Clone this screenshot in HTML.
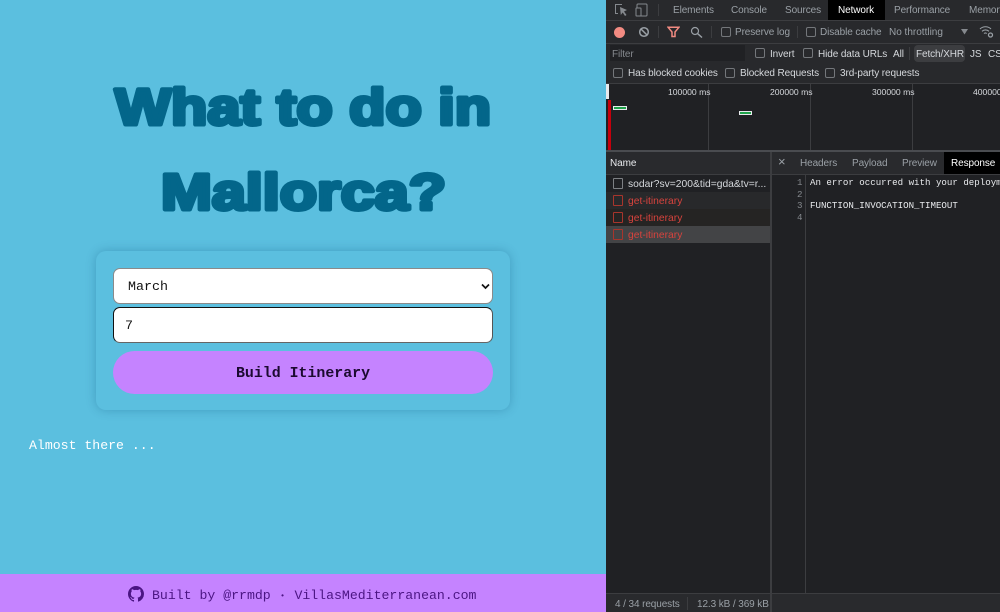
<!DOCTYPE html>
<html lang="en">
<head>
<meta charset="utf-8">
<title>What to do in Mallorca?</title>
<style>
html,body{margin:0;padding:0;width:1000px;height:612px;overflow:hidden;background:#5bbfdf}
*{box-sizing:border-box}
.a{position:absolute;white-space:nowrap}
.m{font-family:"Liberation Mono",monospace}
.s{font-family:"Liberation Sans",sans-serif}
#left{position:absolute;left:0;top:0;width:606px;height:612px;background:#5bbfdf;overflow:hidden}
#card{position:absolute;left:96px;top:251px;width:414px;height:159px;background:#5bbfdf;border-radius:10px;box-shadow:0 0 10px rgba(0,70,110,.28)}
#sel{position:absolute;left:112.5px;top:267.5px;width:380.5px;height:36px;background:#fff;border:1px solid #8a8a8a;border-radius:7px}
#inp{position:absolute;left:112.5px;top:307px;width:380.5px;height:36px;background:#fff;border:1px solid;border-color:#111 #555 #666 #111;border-radius:7px}
#btn{position:absolute;left:112.5px;top:351px;width:380.5px;height:43px;background:#c583ff;border-radius:22px}
#foot{position:absolute;left:0;top:574px;width:606px;height:38px;background:#c583ff}
#dev{position:absolute;left:606px;top:0;width:394px;height:612px;background:#202124;overflow:hidden;color:#9aa0a6;font:10px "Liberation Sans",sans-serif;letter-spacing:-.1px}
.l{position:absolute;background:#3c3d40}
.cb{position:absolute;width:10px;height:10px;border:1px solid #74777b;border-radius:2px}
.t{position:absolute;white-space:nowrap;line-height:14px;margin-top:1px}
.w{color:#d5d8dc}
.r{color:#d8433d}
.n{font-size:10.3px;letter-spacing:0}
.code{font:9.13px/12px "Liberation Mono",monospace;color:#e8eaed;letter-spacing:0;margin-top:0}
.num{font:9.13px/12px "Liberation Mono",monospace;color:#85898e;letter-spacing:0;margin-top:0}
.tl{font-size:8.6px;letter-spacing:0;margin-top:0}
</style>
</head>
<body>
<div id="left">
  <svg class="a" style="left:0;top:0" width="606" height="240">
    <text x="115" y="124.5" font-family="Liberation Sans" font-weight="700" font-size="51" fill="#03668a" stroke="#03668a" stroke-width="4" stroke-linejoin="round" textLength="376" lengthAdjust="spacingAndGlyphs">What to do in</text>
    <text x="161" y="209.5" font-family="Liberation Sans" font-weight="700" font-size="51" fill="#03668a" stroke="#03668a" stroke-width="4" stroke-linejoin="round" textLength="285" lengthAdjust="spacingAndGlyphs">Mallorca?</text>
  </svg>
  <div id="card"></div>
  <div id="sel"></div>
  <div class="a m" style="left:128px;top:279px;font-size:13.33px;line-height:17px;color:#111">March</div>
  <svg class="a" style="left:481px;top:283px" width="9" height="7"><path d="M1 1.5 L4.5 5 L8 1.5" fill="none" stroke="#111" stroke-width="1.7"/></svg>
  <div id="inp"></div>
  <div class="a m" style="left:125px;top:318px;font-size:13.33px;line-height:17px;color:#111">7</div>
  <div id="btn"></div>
  <div class="a m" style="left:236px;top:365px;font-size:14.9px;line-height:18px;font-weight:700;color:#1c0a30">Build Itinerary</div>
  <div class="a m" style="left:29px;top:437px;font-size:13.2px;line-height:17px;color:#fff">Almost there ...</div>
  <div id="foot"></div>
  <svg class="a" style="left:128px;top:586px" width="16" height="16" viewBox="0 0 16 16"><path fill="#4b1583" d="M8 0C3.58 0 0 3.58 0 8c0 3.54 2.29 6.53 5.47 7.59.4.07.55-.17.55-.38v-1.34c-2.23.48-2.7-1.07-2.7-1.07-.36-.92-.89-1.17-.89-1.17-.73-.5.05-.49.05-.49.8.06 1.23.82 1.23.82.71 1.22 1.87.87 2.33.66.07-.52.28-.87.51-1.07-1.78-.2-3.64-.89-3.64-3.95 0-.87.31-1.59.82-2.15-.08-.2-.36-1.02.08-2.12 0 0 .67-.21 2.2.82a7.6 7.6 0 0 1 4 0c1.53-1.04 2.2-.82 2.2-.82.44 1.1.16 1.92.08 2.12.51.56.82 1.27.82 2.15 0 3.07-1.87 3.75-3.65 3.95.29.25.54.73.54 1.48v2.2c0 .21.15.46.55.38A8 8 0 0 0 16 8c0-4.42-3.58-8-8-8z"/></svg>
  <div class="a m" style="left:152px;top:587px;font-size:13.2px;line-height:17px;color:#4b1583">Built by @rrmdp <span style="display:inline-block;width:7.92px;text-align:center;font-size:8px;vertical-align:1px">•</span> VillasMediterranean.com</div>
</div>

<div id="dev">
  <div style="position:absolute;left:0;top:0;width:394px;height:84px;background:#28292c"></div>
  <!-- top toolbar -->
  <div class="l" style="left:0;top:20px;width:394px;height:1px"></div>
  <svg class="a" style="left:8px;top:3px" width="36" height="14" viewBox="0 0 36 14">
    <path d="M8 1.5H1.5V10.5H4" fill="none" stroke="#85898e"/>
    <path d="M6 4L13 7L10 8.5L12.5 12L11 13L8.7 9.5L6.8 12Z" fill="#85898e"/>
    <rect x="23" y="1" width="10" height="12" rx="1" fill="none" stroke="#85898e"/>
    <rect x="22" y="5" width="5" height="8" rx="0.5" fill="#28292c" stroke="#85898e"/>
  </svg>
  <div class="l" style="left:52px;top:4px;width:1px;height:12px"></div>
  <div class="t" style="left:67px;top:3px">Elements</div>
  <div class="t" style="left:125px;top:3px">Console</div>
  <div class="t" style="left:179px;top:3px">Sources</div>
  <div style="position:absolute;left:222px;top:0;width:57px;height:20px;background:#000"></div>
  <div class="t" style="left:232px;top:3px;color:#fff">Network</div>
  <div class="t" style="left:288px;top:3px">Performance</div>
  <div class="t" style="left:363px;top:3px">Memory</div>

  <!-- second toolbar -->
  <div class="l" style="left:0;top:43px;width:394px;height:1px"></div>
  <div style="position:absolute;left:8px;top:27px;width:11px;height:11px;border-radius:50%;background:#f28b82"></div>
  <svg class="a" style="left:32px;top:26px" width="12" height="12" viewBox="0 0 12 12"><circle cx="6" cy="6" r="4.3" fill="none" stroke="#9aa0a6" stroke-width="1.5"/><path d="M3 3L9 9" stroke="#9aa0a6" stroke-width="1.5"/></svg>
  <div class="l" style="left:52px;top:26px;width:1px;height:12px"></div>
  <svg class="a" style="left:61px;top:26px" width="13" height="12" viewBox="0 0 13 12"><path d="M1 1.2H12L8 6V10.5H5V6Z" fill="none" stroke="#f28b82" stroke-width="1.5"/></svg>
  <svg class="a" style="left:84px;top:26px" width="13" height="12" viewBox="0 0 13 12"><circle cx="5" cy="5" r="3.5" fill="none" stroke="#9aa0a6" stroke-width="1.2"/><path d="M7.7 7.7L12 11.5" stroke="#9aa0a6" stroke-width="1.4"/></svg>
  <div class="l" style="left:105px;top:26px;width:1px;height:12px"></div>
  <div class="cb" style="left:115px;top:27px"></div>
  <div class="t" style="left:129px;top:25px">Preserve log</div>
  <div class="l" style="left:191px;top:26px;width:1px;height:12px"></div>
  <div class="cb" style="left:200px;top:27px"></div>
  <div class="t" style="left:214px;top:25px">Disable cache</div>
  <div class="t" style="left:283px;top:25px;letter-spacing:0">No throttling</div>
  <svg class="a" style="left:355px;top:29px" width="8" height="6"><path d="M0 0H7L3.5 5.5Z" fill="#85898e"/></svg>
  <svg class="a" style="left:373px;top:25px" width="15" height="13" viewBox="0 0 15 13"><path d="M1 4C4 1 9 1 12 4M3 6.3C5 4.5 8 4.5 10 6.3M5 8.5C5.8 7.8 7 7.8 7.8 8.5" fill="none" stroke="#9aa0a6" stroke-width="1.1"/><circle cx="11.5" cy="10" r="2" fill="none" stroke="#9aa0a6" stroke-width="1.3"/></svg>

  <!-- filter row -->
  <div style="position:absolute;left:4px;top:45px;width:135px;height:16px;background:#202124"></div>
  <div class="t" style="left:6px;top:47px;color:#85898e">Filter</div>
  <div class="cb" style="left:149px;top:48px"></div>
  <div class="t w" style="left:164px;top:47px">Invert</div>
  <div class="cb" style="left:197px;top:48px"></div>
  <div class="t w" style="left:212px;top:47px">Hide data URLs</div>
  <div class="t w" style="left:287px;top:47px">All</div>
  <div class="l" style="left:303px;top:47px;width:1px;height:13px"></div>
  <div style="position:absolute;left:308px;top:45px;width:51px;height:17px;background:#3c3d40;border-radius:4px"></div>
  <div class="t w" style="left:310px;top:47px">Fetch/XHR</div>
  <div class="t w" style="left:364px;top:47px">JS</div>
  <div class="t w" style="left:382px;top:47px">CSS</div>

  <div class="cb" style="left:7px;top:68px"></div>
  <div class="t w" style="left:22px;top:66px">Has blocked cookies</div>
  <div class="cb" style="left:119px;top:68px"></div>
  <div class="t w" style="left:134px;top:66px">Blocked Requests</div>
  <div class="cb" style="left:219px;top:68px"></div>
  <div class="t w" style="left:234px;top:66px">3rd-party requests</div>
  <div class="l" style="left:0;top:83px;width:394px;height:1px"></div>

  <!-- timeline -->
  <div class="l" style="left:102px;top:84px;width:1px;height:66px"></div>
  <div class="l" style="left:204px;top:84px;width:1px;height:66px"></div>
  <div class="l" style="left:306px;top:84px;width:1px;height:66px"></div>
  <div class="t w tl" style="left:62px;top:85px">100000 ms</div>
  <div class="t w tl" style="left:164px;top:85px">200000 ms</div>
  <div class="t w tl" style="left:266px;top:85px">300000 ms</div>
  <div class="t w tl" style="left:367px;top:85px">400000 ms</div>
  <div style="position:absolute;left:0;top:84px;width:3px;height:15px;background:#e8eaed"></div>
  <div style="position:absolute;left:2px;top:100px;width:3px;height:50px;background:#c5000c"></div>
  <div style="position:absolute;left:7px;top:106px;width:14px;height:4px;background:#e8eaed"></div>
  <div style="position:absolute;left:8px;top:107px;width:12px;height:2px;background:#1fa34a"></div>
  <div style="position:absolute;left:133px;top:111px;width:13px;height:4px;background:#e8eaed"></div>
  <div style="position:absolute;left:134px;top:112px;width:11px;height:2px;background:#1fa34a"></div>
  <div class="l" style="left:0;top:150px;width:394px;height:2px;background:#4a4c50"></div>

  <!-- name column -->
  <div style="position:absolute;left:0;top:152px;width:164px;height:22px;background:#292a2d"></div>
  <div class="l" style="left:0;top:174px;width:164px;height:1px"></div>
  <div class="t w" style="left:4px;top:156px;color:#e8eaed">Name</div>
  <div class="l" style="left:164px;top:152px;width:2px;height:460px;background:#3c3d40"></div>
  <div style="position:absolute;left:0;top:192px;width:164px;height:17px;background:#28292b"></div>
  <div style="position:absolute;left:0;top:209px;width:164px;height:17px;background:#252423"></div>
  <div style="position:absolute;left:0;top:226px;width:164px;height:17px;background:#434446"></div>
  <div class="cb" style="left:7px;top:178px;border-color:#7d8084;height:11px;border-radius:1px"></div>
  <div class="t w n" style="left:22px;top:177px">sodar?sv=200&amp;tid=gda&amp;tv=r...</div>
  <div class="cb" style="left:7px;top:195px;border-color:#a8352c;height:11px;border-radius:1px"></div>
  <div class="t r n" style="left:22px;top:194px">get-itinerary</div>
  <div class="cb" style="left:7px;top:212px;border-color:#a8352c;height:11px;border-radius:1px"></div>
  <div class="t r n" style="left:22px;top:211px">get-itinerary</div>
  <div class="cb" style="left:7px;top:229px;border-color:#a8352c;height:11px;border-radius:1px"></div>
  <div class="t r n" style="left:22px;top:228px">get-itinerary</div>

  <!-- detail tabs -->
  <div style="position:absolute;left:166px;top:152px;width:228px;height:22px;background:#292a2d"></div>
  <div class="l" style="left:166px;top:174px;width:228px;height:1px"></div>
  <div class="t" style="left:172px;top:154px;font-size:13px">×</div>
  <div class="t" style="left:194px;top:156px">Headers</div>
  <div class="t" style="left:246px;top:156px">Payload</div>
  <div class="t" style="left:296px;top:156px">Preview</div>
  <div style="position:absolute;left:338px;top:152px;width:56px;height:22px;background:#000"></div>
  <div class="t" style="left:345px;top:156px;color:#fff">Response</div>

  <!-- response -->
  <div class="l" style="left:199px;top:175px;width:1px;height:419px"></div>
  <div class="t num" style="left:191px;top:177px">1</div>
  <div class="t num" style="left:191px;top:189px">2</div>
  <div class="t num" style="left:191px;top:200px">3</div>
  <div class="t num" style="left:191px;top:212px">4</div>
  <div class="t code" style="left:204px;top:177px">An error occurred with your deployment</div>
  <div class="t code" style="left:204px;top:200px">FUNCTION_INVOCATION_TIMEOUT</div>

  <!-- status bar -->
  <div class="l" style="left:0;top:593px;width:394px;height:1px"></div>
  <div style="position:absolute;left:0;top:594px;width:394px;height:18px;background:#292a2d"></div>
  <div class="l" style="left:164px;top:594px;width:2px;height:18px"></div>
  <div class="t" style="left:9px;top:597px">4 / 34 requests</div>
  <div class="l" style="left:81px;top:597px;width:1px;height:13px"></div>
  <div class="t" style="left:91px;top:597px">12.3 kB / 369 kB</div>
</div>
</body>
</html>
